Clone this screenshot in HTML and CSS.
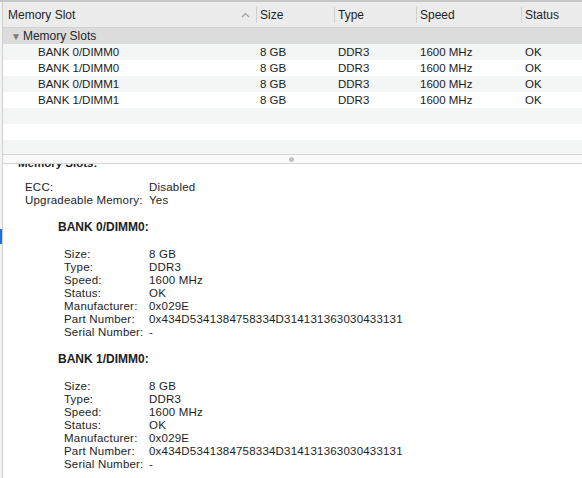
FILE: index.html
```html
<!DOCTYPE html>
<html>
<head>
<meta charset="utf-8">
<link rel="stylesheet" href="styles.css">
</head>
<body>
<div class="window">
  <div class="table">
    <div class="thead">
      <div class="th first"><span>Memory Slot</span>
        <svg class="sort" width="9" height="6" viewBox="0 0 9 6"><path d="M1 5 L4.5 1.5 L8 5" fill="none" stroke="#a0a0a0" stroke-width="1.2"/></svg>
      </div>
      <div class="th sep">Size</div>
      <div class="th sep">Type</div>
      <div class="th sep">Speed</div>
      <div class="th sep">Status</div>
    </div>
    <div class="tbody">
      <div class="group-row"><span class="tri">&#9660;</span>Memory Slots</div>
      <div class="row alt"><div class="td name">BANK 0/DIMM0</div><div class="td">8 GB</div><div class="td">DDR3</div><div class="td">1600 MHz</div><div class="td">OK</div></div>
      <div class="row"><div class="td name">BANK 1/DIMM0</div><div class="td">8 GB</div><div class="td">DDR3</div><div class="td">1600 MHz</div><div class="td">OK</div></div>
      <div class="row alt"><div class="td name">BANK 0/DIMM1</div><div class="td">8 GB</div><div class="td">DDR3</div><div class="td">1600 MHz</div><div class="td">OK</div></div>
      <div class="row"><div class="td name">BANK 1/DIMM1</div><div class="td">8 GB</div><div class="td">DDR3</div><div class="td">1600 MHz</div><div class="td">OK</div></div>
      <div class="row alt empty"></div>
      <div class="row empty"></div>
      <div class="row alt empty"></div>
    </div>
  </div>
  <div class="splitter"><span class="dot"></span></div>
  <div class="detail">
    <div class="detail-inner">
      <div class="h1">Memory Slots:</div>
      <div class="kv lvl1">
        <span>ECC:</span><span>Disabled</span>
        <span>Upgradeable Memory:</span><span>Yes</span>
      </div>
      <div class="h2">BANK 0/DIMM0:</div>
      <div class="kv lvl2">
        <span>Size:</span><span>8 GB</span>
        <span>Type:</span><span>DDR3</span>
        <span>Speed:</span><span>1600 MHz</span>
        <span>Status:</span><span>OK</span>
        <span>Manufacturer:</span><span>0x029E</span>
        <span>Part Number:</span><span>0x434D5341384758334D314131363030433131</span>
        <span>Serial Number:</span><span>-</span>
      </div>
      <div class="h2">BANK 1/DIMM0:</div>
      <div class="kv lvl2">
        <span>Size:</span><span>8 GB</span>
        <span>Type:</span><span>DDR3</span>
        <span>Speed:</span><span>1600 MHz</span>
        <span>Status:</span><span>OK</span>
        <span>Manufacturer:</span><span>0x029E</span>
        <span>Part Number:</span><span>0x434D5341384758334D314131363030433131</span>
        <span>Serial Number:</span><span>-</span>
      </div>
    </div>
  </div>
  <span class="focus-mark"></span>
</div>
</body>
</html>
```
FILE: styles.css
```css
html, body {
  margin: 0;
  padding: 0;
  background: #ffffff;
}
body {
  font-family: "Liberation Sans", Arial, sans-serif;
  color: #222222;
  width: 582px;
  height: 478px;
  overflow: hidden;
}
.window {
  position: relative;
  height: 478px;
  box-sizing: border-box;
  border-top: 2px solid #c6c6c6;
  padding-left: 2px;
  display: flex;
  flex-direction: column;
  background: #f3f3f3;
}
.table, .splitter, .detail {
  border-left: 1px solid #cfcfcf;
}
.thead {
  display: grid;
  grid-template-columns: 253px 78px 82px 105px 1fr;
  height: 25px;
  background: #ececec;
  border-bottom: 1px solid #d2d2d2;
  font-size: 12px;
  color: #1f1f1f;
}
.th {
  position: relative;
  display: flex;
  align-items: center;
  padding-left: 4px;
}
.th.first {
  padding-left: 5px;
  padding-right: 6px;
  justify-content: space-between;
}
.th.sep::before {
  content: "";
  position: absolute;
  left: 0;
  top: 5px;
  bottom: 4px;
  width: 1px;
  background: #d0d0d0;
}
.sort {
  display: block;
}
.tbody {
  height: 126px;
  overflow: hidden;
  background: #ffffff;
  border-bottom: 1px solid #d6d6d6;
}
.group-row {
  height: 16px;
  background: #dcdcdc;
  font-size: 12px;
  display: flex;
  align-items: center;
  padding-left: 8px;
  color: #262626;
}
.tri {
  font-size: 10px;
  color: #7b7b7b;
  margin-right: 2px;
}
.row {
  display: grid;
  grid-template-columns: 253px 78px 82px 105px 1fr;
  height: 16px;
  align-items: center;
  font-size: 11.5px;
  background: #ffffff;
}
.row.alt {
  background: #f4f5f5;
}
.td {
  padding-left: 4px;
  white-space: nowrap;
}
.td.name {
  padding-left: 35px;
}
.splitter {
  height: 8px;
  background: #fafafa;
  border-bottom: 1px solid #d6d6d6;
  display: flex;
  align-items: center;
  justify-content: center;
}
.dot {
  width: 5px;
  height: 5px;
  border-radius: 50%;
  background: #c4c4c4;
  margin-left: -3px;
}
.detail {
  flex: 1;
  overflow: hidden;
  background: #ffffff;
  font-size: 11.5px;
  line-height: 13px;
  letter-spacing: 0.2px;
  color: #1e1e1e;
}
.detail-inner {
  margin-top: -7px;
}
.h1 {
  font-weight: bold;
  padding-left: 15px;
  margin-bottom: 11px;
  letter-spacing: 0;
}
.h2 {
  font-weight: bold;
  font-size: 12px;
  padding-left: 55px;
  margin-bottom: 14px;
  letter-spacing: 0;
}
.kv {
  display: grid;
  margin-bottom: 14px;
  white-space: nowrap;
}
.kv.lvl1 {
  grid-template-columns: 124px auto;
  padding-left: 22px;
}
.kv.lvl2 {
  grid-template-columns: 85px auto;
  padding-left: 61px;
}
.focus-mark {
  position: absolute;
  left: 0;
  top: 227px;
  width: 2px;
  height: 15px;
  background: #1c6fe0;
}
```
